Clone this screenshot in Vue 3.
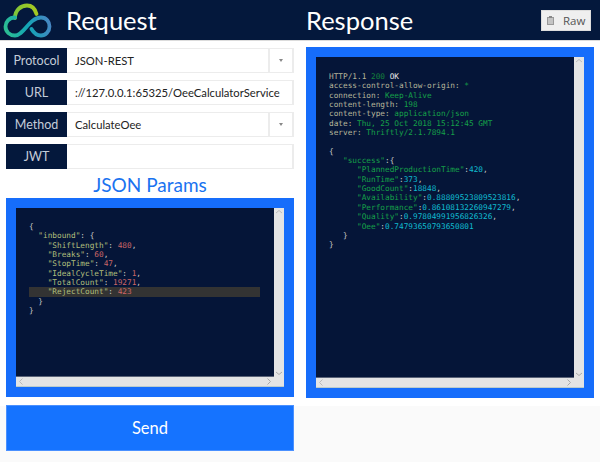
<script setup>
const rows = [
  { label: 'Protocol', value: 'JSON-REST', select: true },
  { label: 'URL', value: '://127.0.0.1:65325/OeeCalculatorService', select: false },
  { label: 'Method', value: 'CalculateOee', select: true },
  { label: 'JWT', value: '', select: false }
]
</script>

<template>
  <div class="page">
    <header class="top">
      <div class="top-left">
        <svg class="logo" width="54" height="40" viewBox="0 0 54 40" fill="none">
          <defs>
            <linearGradient id="wave" x1="4" y1="34" x2="51" y2="20" gradientUnits="userSpaceOnUse">
              <stop offset="0" stop-color="#2fc08f" />
              <stop offset="0.5" stop-color="#12a5b5" />
              <stop offset="1" stop-color="#4a84c4" />
            </linearGradient>
            <linearGradient id="bump" x1="16" y1="16" x2="38" y2="8" gradientUnits="userSpaceOnUse">
              <stop offset="0" stop-color="#7fc63a" />
              <stop offset="1" stop-color="#a8c81e" />
            </linearGradient>
          </defs>
          <path d="M15 18C15 10 21 5.500 27 5.500C31.500 5.500 35 8.500 36.500 14" stroke="url(#bump)" stroke-width="3.800" stroke-linecap="round" />
          <path d="M15 17.500C9 17.500 5.500 22 5.500 26.500C5.500 32 10 35.500 15 35.500C24 35.500 29 17.500 41 17.500C46.500 17.500 49.500 22 49.500 26.500C49.500 31.500 45.500 35.500 41 35.500C36.500 35.500 33.500 32.500 31.500 29" stroke="url(#wave)" stroke-width="3.800" stroke-linecap="round" />
        </svg>
        <h1 class="title">Request</h1>
      </div>
      <div class="top-right">
        <h1 class="title">Response</h1>
        <button class="raw" type="button">
          <svg width="7" height="9" viewBox="0 0 7 9" fill="none">
            <rect x="0.500" y="1.500" width="6" height="7" fill="#c4c4c4" stroke="#999" />
            <rect x="2" y="0" width="3" height="2" fill="#888" />
          </svg>
          <span>Raw</span>
        </button>
      </div>
    </header>

    <main class="columns">
      <section class="col">
        <div class="fields">
          <div v-for="row in rows" :key="row.label" class="field">
            <div class="label">{{ row.label }}</div>
            <div class="value">{{ row.value }}</div>
            <div v-if="row.select" class="caret"><i></i></div>
          </div>
        </div>
        <h2 class="sub">JSON Params</h2>
        <div class="panel params">
          <div class="editor">
            <div class="code"><pre class="json"><span class="pun">{</span>
<span class="pun">  </span><span class="key">"inbound"</span><span class="pun">: {</span>
<span class="pun">    </span><span class="key">"ShiftLength"</span><span class="pun">: </span><span class="num">480</span><span class="pun">,</span>
<span class="pun">    </span><span class="key">"Breaks"</span><span class="pun">: </span><span class="num">60</span><span class="pun">,</span>
<span class="pun">    </span><span class="key">"StopTime"</span><span class="pun">: </span><span class="num">47</span><span class="pun">,</span>
<span class="pun">    </span><span class="key">"IdealCycleTime"</span><span class="pun">: </span><span class="num">1</span><span class="pun">,</span>
<span class="pun">    </span><span class="key">"TotalCount"</span><span class="pun">: </span><span class="num">19271</span><span class="pun">,</span>
<span class="active"><span class="pun">    </span><span class="key">"RejectCount"</span><span class="pun">: </span><span class="num">423</span></span><span class="pun">  }</span>
<span class="pun">}</span></pre></div>
            <div class="vbar">
              <svg width="10" height="8" viewBox="0 0 10 8" fill="none"><path d="M2 5L5 2.500L8 5" stroke="#bbb" /></svg>
              <svg width="10" height="8" viewBox="0 0 10 8" fill="none"><path d="M2 3L5 5.500L8 3" stroke="#aaa" /></svg>
            </div>
            <div class="hbar">
              <svg width="8" height="9" viewBox="0 0 8 9" fill="none"><path d="M5.500 1.500L2.500 4.500L5.500 7.500" stroke="#bbb" /></svg>
              <svg width="8" height="9" viewBox="0 0 8 9" fill="none"><path d="M2.500 1.500L5.500 4.500L2.500 7.500" stroke="#aaa" /></svg>
            </div>
          </div>
        </div>
        <button class="send" type="button">Send</button>
      </section>

      <section class="col">
        <div class="panel response">
          <div class="editor">
            <div class="code"><pre class="resp"><span class="hk">HTTP/1.1 </span><span class="st">200</span><span class="ok"> OK</span>
<span class="hk">access-control-allow-origin: </span><span class="hv">*</span>
<span class="hk">connection: </span><span class="hv">Keep-Alive</span>
<span class="hk">content-length: </span><span class="hv">198</span>
<span class="hk">content-type: </span><span class="hv">application/json</span>
<span class="hk">date: </span><span class="hv">Thu, 25 Oct 2018 15:12:45 GMT</span>
<span class="hk">server: </span><span class="hv">Thriftly/2.1.7894.1</span>

<span class="pun">{</span>
<span class="pun">   </span><span class="rk">"success"</span><span class="pun">:{</span>
<span class="pun">      </span><span class="rk">"PlannedProductionTime"</span><span class="pun">:</span><span class="rn">420</span><span class="pun">,</span>
<span class="pun">      </span><span class="rk">"RunTime"</span><span class="pun">:</span><span class="rn">373</span><span class="pun">,</span>
<span class="pun">      </span><span class="rk">"GoodCount"</span><span class="pun">:</span><span class="rn">18848</span><span class="pun">,</span>
<span class="pun">      </span><span class="rk">"Availability"</span><span class="pun">:</span><span class="rn">0.88809523809523816</span><span class="pun">,</span>
<span class="pun">      </span><span class="rk">"Performance"</span><span class="pun">:</span><span class="rn">0.86108132260947279</span><span class="pun">,</span>
<span class="pun">      </span><span class="rk">"Quality"</span><span class="pun">:</span><span class="rn">0.97804991956826326</span><span class="pun">,</span>
<span class="pun">      </span><span class="rk">"Oee"</span><span class="pun">:</span><span class="rn">0.74793650793650801</span>
<span class="pun">   }</span>
<span class="pun">}</span></pre></div>
            <div class="vbar">
              <svg width="10" height="8" viewBox="0 0 10 8" fill="none"><path d="M2 5L5 2.500L8 5" stroke="#bbb" /></svg>
              <svg width="10" height="8" viewBox="0 0 10 8" fill="none"><path d="M2 3L5 5.500L8 3" stroke="#aaa" /></svg>
            </div>
            <div class="hbar">
              <svg width="8" height="9" viewBox="0 0 8 9" fill="none"><path d="M5.500 1.500L2.500 4.500L5.500 7.500" stroke="#bbb" /></svg>
              <svg width="8" height="9" viewBox="0 0 8 9" fill="none"><path d="M2.500 1.500L5.500 4.500L2.500 7.500" stroke="#aaa" /></svg>
            </div>
          </div>
        </div>
      </section>
    </main>
  </div>
</template>

<style>
html, body { margin: 0; padding: 0; }
</style>

<style scoped>
.page {
  width: 600px;
  height: 462px;
  overflow: hidden;
  font-family: "Lato", "Liberation Sans", sans-serif;
  background: linear-gradient(#fff 0, #fff 406px, #fafafa 406px);
}
.top {
  height: 40px;
  background: #04183c;
  border-bottom: 1px solid #dcdcdc;
  display: grid;
  grid-template-columns: 306px 294px;
}
.top-left {
  display: flex;
  align-items: center;
}
.logo {
  display: block;
  margin-right: 12px;
}
.top-right {
  display: flex;
  align-items: center;
  justify-content: space-between;
  padding-right: 9px;
}
.title {
  margin: 0;
  font-size: 25.500px;
  font-weight: 400;
  color: #fff;
  line-height: 40px;
}
.raw {
  width: 50px;
  height: 21px;
  padding: 0 0 0 5px;
  margin: 0;
  border: 1px solid #ddd;
  background: #efefef;
  color: #555;
  font: 11.500px "Open Sans", sans-serif;
  display: flex;
  align-items: center;
  gap: 9px;
  box-sizing: border-box;
}
.columns {
  display: grid;
  grid-template-columns: 288px 288px;
  column-gap: 12px;
  padding: 6px 6px 0;
}
.fields {
  display: flex;
  flex-direction: column;
  gap: 7px;
  margin-top: 1px;
}
.field {
  display: flex;
  height: 25px;
}
.label {
  width: 61px;
  flex: none;
  background: #04183c;
  color: #c4ccd8;
  text-align: center;
  font-size: 12.500px;
  line-height: 25px;
}
.value {
  flex: 1;
  padding-left: 8px;
  font-size: 11.250px;
  line-height: 23px;
  color: #222;
  white-space: nowrap;
  overflow: hidden;
  border: 1px solid #ececec;
  border-left: 0;
  border-right-width: 2px;
}
.caret {
  width: 26px;
  flex: none;
  box-sizing: border-box;
  border: 1px solid #ececec;
  border-left-width: 2px;
  border-right-width: 2px;
  margin-left: -2px;
  display: flex;
  align-items: center;
  justify-content: center;
}
.caret i {
  display: block;
  border: 2.500px solid transparent;
  border-top: 3px solid #888;
  border-bottom: 0;
}
.sub {
  margin: 0;
  height: 29px;
  text-align: center;
  font-size: 19px;
  line-height: 32px;
  font-weight: 400;
  color: #1a73f0;
}
.panel {
  box-sizing: border-box;
  background: #166dfb;
  padding: 10px;
  width: 288px;
}
.params { height: 199px; }
.response { height: 351px; }
.response .code { padding-top: 15px; }
.editor {
  height: 100%;
  display: grid;
  grid-template-columns: 1fr 10px;
  grid-template-rows: 1fr 10px;
  background: #e4e4e4;
}
.code {
  background: #051538;
  border-bottom: 1px solid #5a6378;
  padding: 14px 0 0 13px;
  overflow: hidden;
}
pre {
  margin: 0;
  font-family: "DejaVu Sans Mono", "Liberation Mono", monospace;
  font-size: 7.750px;
  line-height: 9.350px;
}
.active {
  display: block;
  width: 231px;
  background: #333;
}
.pun { color: #c5c8c6; }
.key { color: #b0bf7c; }
.num { color: #cc6666; }
.hk { color: #b6b59a; }
.st { color: #14803c; }
.ok { color: #e6e6e6; }
.hv { color: #15a049; }
.rk { color: #15a049; }
.rn { color: #10bcd0; }
.vbar {
  display: flex;
  flex-direction: column;
  justify-content: space-between;
}
.hbar {
  grid-column: 1 / -1;
  display: flex;
  justify-content: space-between;
  padding: 0 11px 0 1px;
  border-bottom: 1px solid #bcc;
  box-sizing: border-box;
}
.vbar svg, .hbar svg { display: block; }
.send {
  display: block;
  width: 288px;
  height: 46px;
  margin: 8px 0 0;
  padding: 0;
  border: 1px solid #4a90ff;
  background: #1573ff;
  color: #fff;
  font: 400 16.500px "Lato", sans-serif;
  box-sizing: border-box;
}
</style>
